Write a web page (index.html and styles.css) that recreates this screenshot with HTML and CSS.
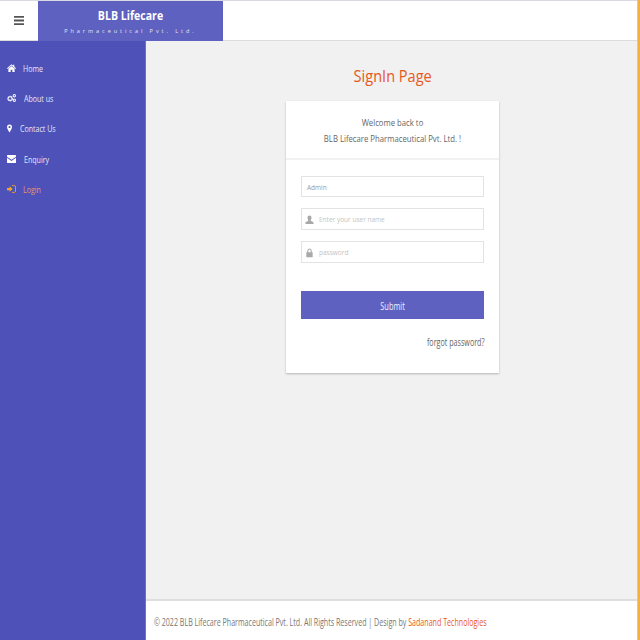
FILE: index.html
```html
<!DOCTYPE html>
<html lang="en">
<head>
<meta charset="utf-8">
<title>SignIn Page</title>
<link rel="stylesheet" href="styles.css">
</head>
<body>
<div class="shell">
  <div class="app">
    <header class="topbar">
      <button class="burger" aria-label="menu">
        <svg width="10" height="9" viewBox="0 0 10 9"><path d="M0 0h10v1.800H0zM0 3.600h10v1.800H0zM0 7.200h10V9H0z" fill="#555"/></svg>
      </button>
      <div class="brand">
        <div class="brand-name">BLB Lifecare</div>
        <div class="brand-sub">Pharmaceutical Pvt. Ltd.</div>
      </div>
    </header>
    <div class="body">
      <nav class="sidebar">
        <a class="nav-item"><svg class="ico" viewBox="0 0 16 14"><path d="M8 0.500 L0 7.500 L1 8.600 L8 2.600 L15 8.600 L16 7.500 L13 4.900 V1 H11 V3.200Z M2.500 8.500 V14 H6.500 V10 H9.500 V14 H13.500 V8.500 L8 3.800Z" fill="#fff"/></svg><span class="nav-label gap-home">Home</span></a>
        <a class="nav-item"><svg class="ico" viewBox="0 0 16 14"><circle cx="5.500" cy="8" r="3.600" fill="none" stroke="#fff" stroke-width="2.800" stroke-dasharray="2.300 .5"/><circle cx="13" cy="3" r="2.100" fill="none" stroke="#fff" stroke-width="1.800"/><circle cx="13" cy="11" r="2.100" fill="none" stroke="#fff" stroke-width="1.800"/></svg><span class="nav-label gap-about">About us</span></a>
        <a class="nav-item"><svg class="ico ico-pin" viewBox="0 0 8 13"><path fill-rule="evenodd" d="M4 0 a4 4 0 0 1 4 4 c0 2.500 -2.500 6 -4 9 c-1.500 -3 -4 -6.500 -4 -9 a4 4 0 0 1 4 -4Z M4 2.300 a1.700 1.700 0 1 0 .01 0Z" fill="#fff"/></svg><span class="nav-label gap-contact">Contact Us</span></a>
        <a class="nav-item"><svg class="ico ico-mail" viewBox="0 0 18 14" preserveAspectRatio="none"><path d="M0 1.500 Q0 0 1.500 0 H16.500 Q18 0 18 1.500 V3 L9 8.500 L0 3Z M0 5 L9 10.500 L18 5 V12.500 Q18 14 16.500 14 H1.500 Q0 14 0 12.500Z" fill="#fff"/></svg><span class="nav-label gap-enquiry">Enquiry</span></a>
        <a class="nav-item nav-active"><svg class="ico" viewBox="0 0 16 14"><path d="M0 5 H4.500 V2 L10 7 L4.500 12 V9 H0Z" fill="#f5a623"/><path d="M9 1 H13 Q15.200 1 15.200 3.200 V10.800 Q15.200 13 13 13 H9" fill="none" stroke="#f5a623" stroke-width="1.600"/></svg><span class="nav-label gap-login">Login</span></a>
      </nav>
      <div class="content">
        <main class="main">
          <h1 class="title">SignIn Page</h1>
          <section class="card">
            <div class="card-head">
              <p>Welcome back to</p>
              <p>BLB Lifecare Pharmaceutical Pvt. Ltd. !</p>
            </div>
            <form class="card-body">
              <div class="field"><span class="field-text filled">Admin</span></div>
              <div class="field">
                <svg class="field-ico" viewBox="0 0 10 10"><path d="M5 0 C6.800 0 7.300 1.300 7.200 2.900 C7.100 4.200 6.500 5 6.300 5.600 C6.300 6.400 9.500 6.800 9.500 8 V9.500 H.5 V8 C.5 6.800 3.700 6.400 3.700 5.600 C3.500 5 2.900 4.200 2.800 2.900 C2.700 1.300 3.200 0 5 0Z" fill="#a9a9a9"/></svg>
                <span class="field-text">Enter your user name</span>
              </div>
              <div class="field">
                <svg class="field-ico" viewBox="0 0 10 10"><path fill-rule="evenodd" d="M1.500 4.200 V9.800 H8.500 V4.200 H7.500 V3 C7.500 1 6.300 0 5 0 C3.700 0 2.500 1 2.500 3 V4.200Z M3.700 4.200 V3 C3.700 1.800 4.200 1.200 5 1.200 C5.800 1.200 6.300 1.800 6.300 3 V4.200Z" fill="#a9a9a9"/></svg>
                <span class="field-text">password</span>
              </div>
              <button type="button" class="submit"><span class="submit-label">Submit</span></button>
              <a class="forgot">forgot password?</a>
            </form>
          </section>
        </main>
        <footer class="footer"><span class="footer-text">© 2022 BLB Lifecare Pharmaceutical Pvt. Ltd. All Rights Reserved | Design by <span class="footer-link">Sadanand Technologies</span></span></footer>
      </div>
    </div>
  </div>
  <div class="edge"></div>
</div>
</body>
</html>
```
FILE: styles.css
```css
* { box-sizing: border-box; }
html, body { margin: 0; height: 100%; }
body { font-family: "Open Sans", "Noto Sans", sans-serif; overflow: hidden; background: #fff; }
.shell { display: flex; width: 640px; height: 640px; }
.app { flex: 1; display: flex; flex-direction: column; min-width: 0; }
.edge { width: 3px; background: #f5b041; border-left: 1px solid #f8c46e; }

.topbar { height: 41px; flex: none; display: flex; background: #fff; border-top: 1px solid #d9d9e6; border-bottom: 1px solid #dcdcdc; }
.burger { width: 38px; border: 0; padding: 0; background: #fff; display: flex; align-items: center; justify-content: center; }
.brand { width: 185px; margin-bottom: -1px; background: #5f61c0; color: #fff; text-align: center; }
.brand-name { font-size: 12px; font-weight: 700; line-height: 14px; margin-top: 8px; transform: scaleX(.88); }
.brand-sub { font-size: 5.500px; letter-spacing: 2.950px; line-height: 8px; margin-top: 4px; color: #e4e4f5; }

.body { flex: 1; display: flex; min-height: 0; }
.sidebar { width: 146px; flex: none; background: #4d51b8; padding-top: 12px; border-right: 1px solid #6e71c8; }
.nav-item { display: flex; align-items: center; height: 30.300px; padding-left: 7px; color: #e6e6f6; font-size: 8.500px; }
.nav-label { transform: scaleX(.83); transform-origin: left center; }
.nav-active { color: #e0a04f; }
.ico { width: 9px; height: 8px; flex: none; }
.ico-pin { width: 5px; height: 9px; }
.ico-mail { width: 9px; height: 8px; }
.gap-home { margin-left: 7px; }
.gap-about { margin-left: 8px; }
.gap-contact { margin-left: 8px; }
.gap-enquiry { margin-left: 8px; }
.gap-login { margin-left: 7px; }

.content { flex: 1; display: flex; flex-direction: column; min-width: 0; }
.main { flex: 1; background: #f1f1f1; padding-top: 25px; padding-left: 2px; display: flex; flex-direction: column; align-items: center; }
.title { margin: 0; font-size: 17px; font-weight: 400; line-height: 20px; color: #e8581c; transform: scaleX(.855); }
.card { width: 213px; margin-top: 15px; background: #fff; box-shadow: 0 1px 2px rgba(0,0,0,.25); }
.card-head { height: 59px; padding-top: 14px; border-bottom: 2px solid #f1f1f1; text-align: center; color: #666; font-size: 9px; line-height: 16px; }
.card-head p { margin: 0; transform: scaleX(.86); white-space: nowrap; }
.card-body { padding: 16px 15px 0; display: flex; flex-direction: column; height: 213px; }
.field { height: 22px; margin-bottom: 11px; display: flex; align-items: center; padding: 1px 0 0 3px; border: 1px solid #e3e3e3; background: #fff; flex: none; }
.field:first-child { height: 21px; }
.field-ico { width: 9px; height: 10px; flex: none; margin-right: 5px; }
.field-text { font-size: 6.500px; color: #c4c4c4; }
.field-text.filled { color: #9a9a9a; margin-left: 2px; }
.submit { height: 28px; margin-top: 17px; padding: 2px 0 0; flex: none; border: 0; background: #5f61c0; color: #eef; font-family: inherit; font-size: 10px; }
.submit-label { display: inline-block; transform: scaleX(.74); }
.forgot { margin: 16px -1px 0 0; align-self: flex-end; font-size: 10px; line-height: 14px; color: #666; white-space: nowrap; transform: scaleX(.715); transform-origin: right center; }

.footer { height: 41px; flex: none; background: #fff; border-top: 2px solid #dedede; padding: 3px 0 0 8px; display: flex; align-items: center; white-space: nowrap; font-size: 10px; color: #777; }
.footer-text { flex: none; transform: scaleX(.71); transform-origin: left center; }
.footer-link { color: #e8581c; }
```
